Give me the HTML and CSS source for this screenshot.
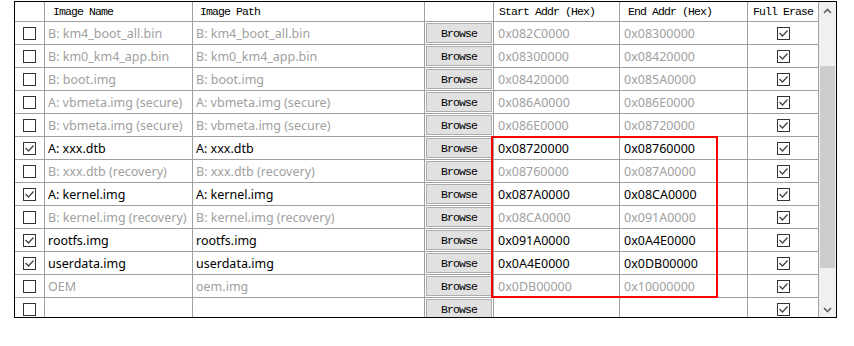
FILE: index.html
```html
<!DOCTYPE html>
<html>
<head>
<meta charset="utf-8">
<link rel="stylesheet" href="styles.css">
</head>
<body>
<div class="frame">
  <div class="grid" id="grid">
    <div class="h"></div>
    <div class="h pl8">Image Name</div>
    <div class="h pl7">Image Path</div>
    <div class="h"></div>
    <div class="h pl5">Start Addr (Hex)</div>
    <div class="h pl8">End Addr (Hex)</div>
    <div class="h center">Full Erase</div>
  </div>
  <div class="scrollbar">
    <svg class="arrow up" width="9" height="6" viewBox="0 0 9 6"><path d="M1 5 L4.5 1.5 L8 5" fill="none" stroke="#606060" stroke-width="1.6"/></svg>
    <div class="thumb"></div>
    <svg class="arrow down" width="9" height="6" viewBox="0 0 9 6"><path d="M1 1 L4.5 4.5 L8 1" fill="none" stroke="#606060" stroke-width="1.6"/></svg>
  </div>
  <div class="redbox"></div>
</div>
<script>
const rows = [
  [0,"B: km4_boot_all.bin","B: km4_boot_all.bin","0x082C0000","0x08300000",0],
  [0,"B: km0_km4_app.bin","B: km0_km4_app.bin","0x08300000","0x08420000",0],
  [0,"B: boot.img","B: boot.img","0x08420000","0x085A0000",0],
  [0,"A: vbmeta.img (secure)","A: vbmeta.img (secure)","0x086A0000","0x086E0000",0],
  [0,"B: vbmeta.img (secure)","B: vbmeta.img (secure)","0x086E0000","0x08720000",0],
  [1,"A: xxx.dtb","A: xxx.dtb","0x08720000","0x08760000",1],
  [0,"B: xxx.dtb (recovery)","B: xxx.dtb (recovery)","0x08760000","0x087A0000",0],
  [1,"A: kernel.img","A: kernel.img","0x087A0000","0x08CA0000",1],
  [0,"B: kernel.img (recovery)","B: kernel.img (recovery)","0x08CA0000","0x091A0000",0],
  [1,"rootfs.img","rootfs.img","0x091A0000","0x0A4E0000",1],
  [1,"userdata.img","userdata.img","0x0A4E0000","0x0DB00000",1],
  [0,"OEM","oem.img","0x0DB00000","0x10000000",0],
  [0,"","","","",0]
];
const check = '<svg width="13" height="13" viewBox="0 0 13 13"><path d="M2.5 6 L5.5 9 L10.5 3.5" fill="none" stroke="#444" stroke-width="1.3"/></svg>';
function box(on){ return '<span class="cb">' + (on ? check : '') + '</span>'; }
const g = document.getElementById('grid');
let html = '';
for (const r of rows) {
  const cls = r[5] ? 'c' : 'c dis';
  html += '<div class="c center">' + box(r[0]) + '</div>';
  html += '<div class="' + cls + ' pl3">' + r[1] + '</div>';
  html += '<div class="' + cls + ' pl3">' + r[2] + '</div>';
  html += '<div class="c btncell"><span class="btn">Browse</span></div>';
  html += '<div class="' + cls + ' pl4">' + r[3] + '</div>';
  html += '<div class="' + cls + ' pl4">' + r[4] + '</div>';
  html += '<div class="c center">' + box(1) + '</div>';
}
g.insertAdjacentHTML('beforeend', html);
</script>
</body>
</html>
```

FILE: styles.css
```css
html, body {
  margin: 0;
  padding: 0;
  background: #fff;
}
body {
  font-family: "Noto Sans", "Liberation Sans", sans-serif;
}
.frame {
  position: relative;
  margin: 1px 0 0 14px;
  width: 823px;
  height: 317px;
  box-sizing: border-box;
  border: 1px solid #000;
  display: flex;
  overflow: hidden;
}
.grid {
  display: grid;
  grid-template-columns: 30px 148px 232px 69px 126px 128px 71px;
  grid-template-rows: 20px;
  grid-auto-rows: 23px;
  width: 804px;
  flex: none;
  align-content: start;
}
.grid > div {
  box-sizing: border-box;
  border-right: 1px solid #a0a0a0;
  border-bottom: 1px solid #a0a0a0;
  display: flex;
  align-items: center;
  white-space: nowrap;
  overflow: hidden;
}
.h {
  font-family: "Liberation Mono", monospace;
  font-size: 11.5px;
  letter-spacing: -0.9px;
  color: #000;
}
.c {
  font-size: 12.5px;
  color: #000;
}
.c.dis {
  color: #a0a0a0;
}
.pl3 { padding-left: 3px; }
.pl4 { padding-left: 4px; }
.pl5 { padding-left: 5px; }
.pl7 { padding-left: 7px; }
.pl8 { padding-left: 8px; }
.center { justify-content: center; }
.cb {
  width: 13px;
  height: 13px;
  box-sizing: border-box;
  border: 1px solid #333;
  background: #fff;
  display: block;
  position: relative;
}
.cb svg {
  position: absolute;
  left: -1px;
  top: -1px;
}
.btncell {
  padding-left: 1px;
}
.btn {
  width: 66px;
  height: 20px;
  box-sizing: border-box;
  background: #e1e1e1;
  border: 1px solid #adadad;
  font-family: "Liberation Mono", monospace;
  font-size: 11.5px;
  letter-spacing: -0.9px;
  color: #000;
  display: flex;
  align-items: center;
  justify-content: center;
}
.scrollbar {
  flex: none;
  width: 17px;
  background: #f0f0f0;
  position: relative;
}
.arrow {
  position: absolute;
  left: 4px;
}
.arrow.up { top: 6px; }
.arrow.down { top: 305px; }
.thumb {
  position: absolute;
  left: 1px;
  right: 1px;
  top: 64px;
  height: 202px;
  background: #cdcdcd;
}
.redbox {
  position: absolute;
  left: 476px;
  top: 134px;
  width: 227px;
  height: 162px;
  box-sizing: border-box;
  border: 2px solid #ff0000;
  pointer-events: none;
}
```
